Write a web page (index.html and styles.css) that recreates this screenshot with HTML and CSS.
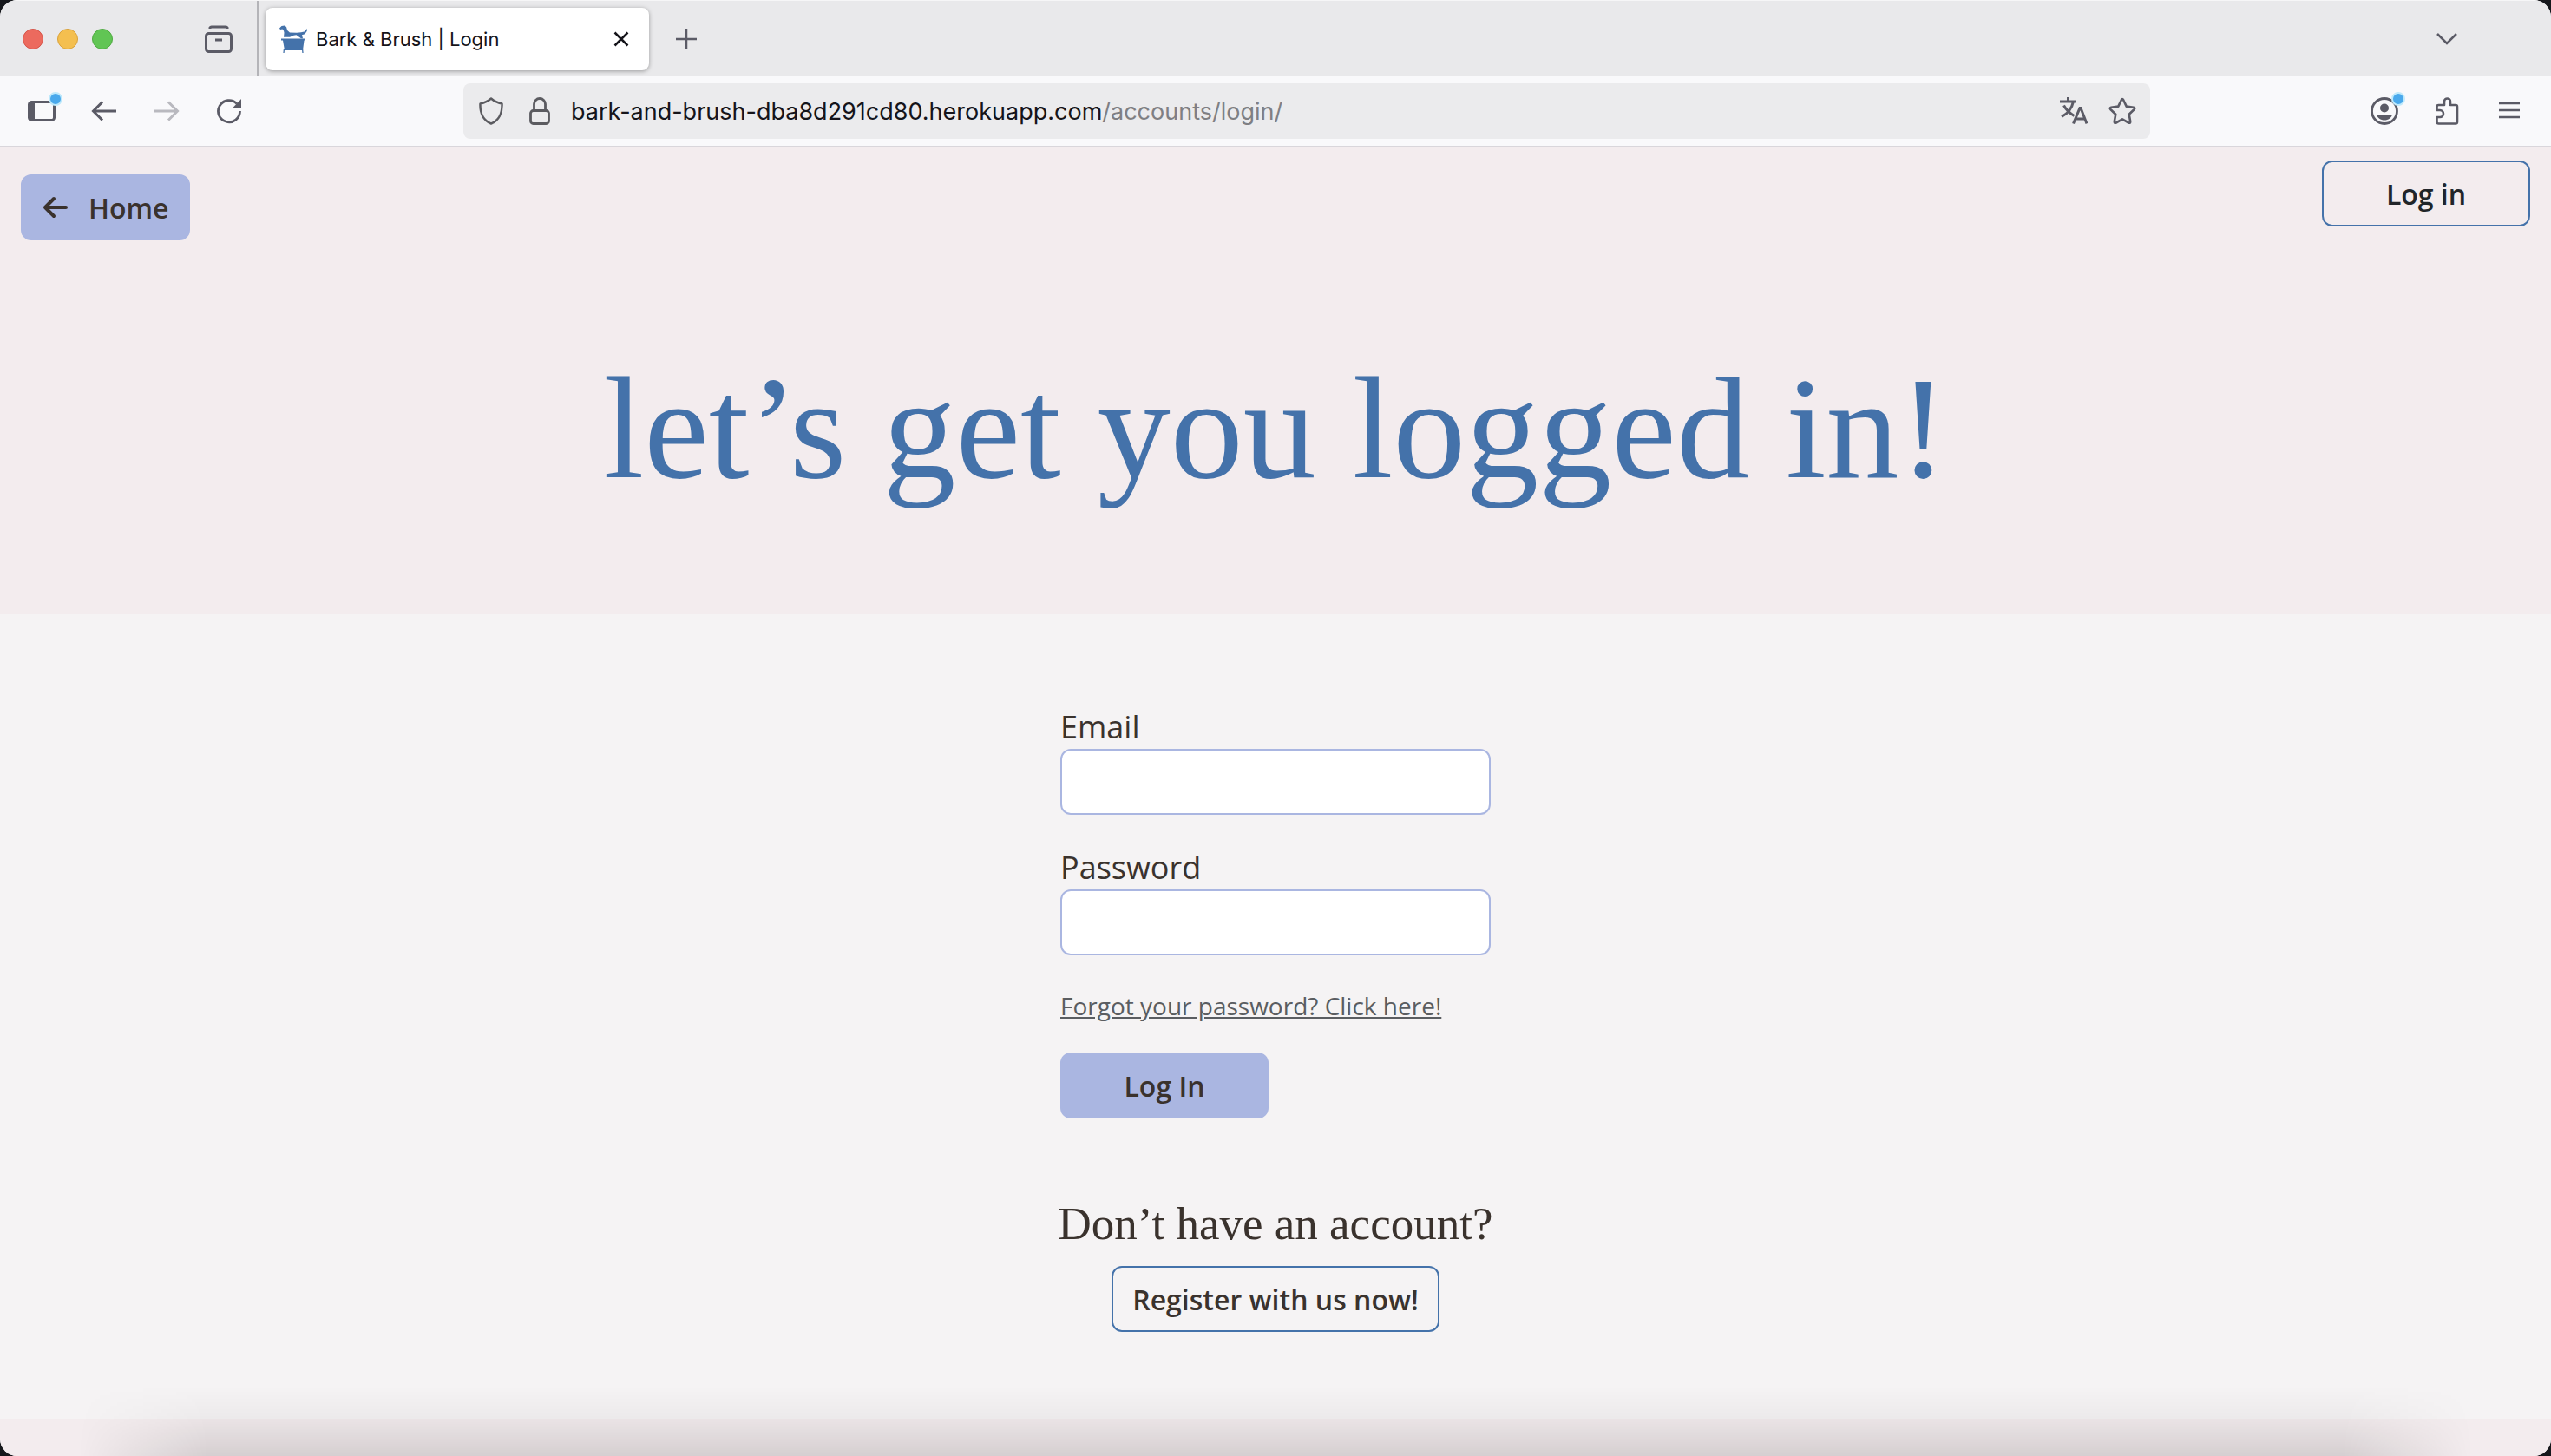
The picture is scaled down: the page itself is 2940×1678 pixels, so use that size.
FILE: index.html
```html
<!DOCTYPE html>
<html lang="en">
<head>
<meta charset="utf-8">
<title>Bark &amp; Brush | Login</title>
<link rel="stylesheet" href="styles.css">
</head>
<body>
<div class="window">
  <header class="tabstrip">
    <div class="lights">
      <button class="light light-close" aria-label="Close window"></button>
      <button class="light light-min" aria-label="Minimise window"></button>
      <button class="light light-max" aria-label="Zoom window"></button>
    </div>
    <button class="icon-btn archive" aria-label="Recent browsing">
      <svg class="icon" viewBox="0 0 32 32"><path d="M6 4V3a2 2 0 0 1 2-1h16a2 2 0 0 1 2 1v1" fill="none" stroke="currentColor" stroke-width="3"/><rect x="1.5" y="9.500" width="29" height="21" rx="3" fill="none" stroke="currentColor" stroke-width="3"/><path d="M12 17h8" stroke="currentColor" stroke-width="3"/></svg>
    </button>
    <div class="tab">
      <svg class="icon" viewBox="0 0 32 32" fill="#4472aa"><path d="M0 3.500L2.500 1 6 .500 8 2l1.200 4L12 8.500l8 .300 5-.600 4.500-1 2-3.500.300 3-2.500 3.500-3.300 1 1 4H25l-3.500-2.500-2-1.500-3 .500-4.500 2H5l.500-5L5 6.500 3.500 4.500 1 5z"/><path d="M2 15.500h28v2h-1.500L27 29H6L4 17.500H2z"/><path d="M5.500 27l-.500 5M26.500 27l.500 5" stroke="#4472aa" stroke-width="1.300"/></svg>
      <span class="tab-title">Bark &amp; Brush | Login</span>
      <button class="tab-close" aria-label="Close tab"><svg class="icon-sm" viewBox="0 0 24 24"><path d="M4.500 4.500l15 15M19.500 4.500l-15 15" stroke="#15141a" stroke-width="2.500"/></svg></button>
    </div>
    <button class="icon-btn new-tab" aria-label="New tab"><svg class="icon-sm" viewBox="0 0 24 24"><path d="M12 0v24M0 12h24" stroke="currentColor" stroke-width="2.500"/></svg></button>
    <button class="icon-btn all-tabs" aria-label="List all tabs"><svg class="icon-sm" viewBox="0 0 24 24"><path d="M1 6l11 11L23 6" fill="none" stroke="currentColor" stroke-width="2.500"/></svg></button>
  </header>

  <nav class="toolbar" aria-label="Browser">
    <div class="nav-buttons">
      <button class="icon-btn" aria-label="Sidebar"><svg class="icon" viewBox="0 0 32 32"><rect x="1.500" y="5.500" width="29" height="21" rx="3" fill="none" stroke="currentColor" stroke-width="3"/><path d="M2 6h6v20H2z" fill="currentColor"/></svg><span class="dot"></span></button>
      <button class="icon-btn" aria-label="Back"><svg class="icon" viewBox="0 0 32 32"><path d="M30 16H3.500M14 5.500L3.500 16 14 26.500" fill="none" stroke="currentColor" stroke-width="3"/></svg></button>
      <button class="icon-btn" aria-label="Forward" disabled><svg class="icon" viewBox="0 0 32 32"><path d="M2 16h26.500M18 5.500L28.500 16 18 26.500" fill="none" stroke="currentColor" stroke-width="3"/></svg></button>
      <button class="icon-btn" aria-label="Reload"><svg class="icon" viewBox="0 0 32 32"><path d="M28.500 16A12.500 12.500 0 1 1 25 7.500" fill="none" stroke="currentColor" stroke-width="2.800"/><path d="M30 2v10H20.500z" fill="currentColor"/></svg></button>
    </div>
    <div class="urlbar">
      <svg class="icon" viewBox="0 0 32 32"><path d="M16 1.500C12 5 8 6.500 3.500 7.500 3 18 7 27 16 30.500 25 27 29 18 28.500 7.500 24 6.500 20 5 16 1.500z" fill="none" stroke="currentColor" stroke-width="2.500" stroke-linejoin="round"/></svg>
      <svg class="icon" viewBox="0 0 32 32"><rect x="5.500" y="15.500" width="21" height="15" rx="3" fill="none" stroke="currentColor" stroke-width="2.800"/><path d="M9.500 15V8a6.500 6.500 0 0 1 13 0v7" fill="none" stroke="currentColor" stroke-width="2.800"/></svg>
      <div class="url">bark-and-brush-dba8d291cd80.herokuapp.com<span class="url-path">/accounts/login/</span></div>
      <button class="icon-btn" aria-label="Translate page"><svg class="icon" viewBox="0 0 32 32" fill="none" stroke="currentColor" stroke-width="3"><path d="M0 5h19M9.500 0v5M15.500 5C14 12 9 19 2 22.500M4.500 9.500c3 5.500 7 9 12 12"/><path d="M15.500 30.500L23 12.500h1l7 18M18 25h11"/></svg></button>
      <button class="icon-btn" aria-label="Bookmark page"><svg class="icon" viewBox="0 0 32 32"><path d="M14.800 3.200q1.200-2.200 2.400 0l3.500 7.400 8.300 1.200q2.200.500.700 2.200l-6 5.800 1.500 8.300q.200 2.300-2 1.400L16 25.400l-7.200 4.100q-2.200.900-2-1.400l1.500-8.300-6-5.800q-1.500-1.700.700-2.200l8.300-1.200z" fill="none" stroke="currentColor" stroke-width="2.600" stroke-linejoin="round"/></svg></button>
    </div>
    <div class="nav-buttons">
      <button class="icon-btn" aria-label="Account"><svg class="icon" viewBox="0 0 32 32"><circle cx="16" cy="16" r="14.500" fill="none" stroke="currentColor" stroke-width="2.800"/><circle cx="16" cy="12.500" r="5" fill="currentColor"/><path d="M7 20h18c-1 4-4.500 6.500-9 6.500S8 24 7 20z" fill="currentColor"/></svg><span class="dot"></span></button>
      <button class="icon-btn" aria-label="Extensions"><svg class="icon" viewBox="0 0 32 32"><path d="M4.500 15V11a2 2 0 0 1 2-2H13V5a3.500 3.500 0 0 1 7 0v4h6a2 2 0 0 1 2 2v17.500a2 2 0 0 1-2 2H6.500a2 2 0 0 1-2-2V23H8a4 4 0 0 0 0-8z" fill="none" stroke="currentColor" stroke-width="2.600" stroke-linejoin="round"/></svg></button>
      <button class="icon-btn" aria-label="Menu"><svg class="icon" viewBox="0 0 32 32"><path d="M4 7h24M4 15h24M4 23h24" stroke="currentColor" stroke-width="2.600"/></svg></button>
    </div>
  </nav>

  <section class="hero">
    <div class="hero-bar">
      <a class="btn btn-fill home" href="#"><svg class="icon" viewBox="0 0 32 32"><path d="M28 16H4M14 6L4 16l10 10" fill="none" stroke="currentColor" stroke-width="4" stroke-linecap="round" stroke-linejoin="round"/></svg>Home</a>
      <a class="btn btn-line login-link" href="#">Log in</a>
    </div>
    <h1 class="title">let’s get you logged in!</h1>
  </section>

  <main class="content">
    <form class="form">
      <div class="field"><label for="email">Email</label><input id="email" type="email"></div>
      <div class="field"><label for="password">Password</label><input id="password" type="password"></div>
      <a class="forgot" href="#">Forgot your password? Click here!</a>
      <button class="btn btn-fill submit" type="button">Log In</button>
    </form>
    <h2 class="subtitle">Don’t have an account?</h2>
    <a class="btn btn-line" href="#">Register with us now!</a>
  </main>
  <footer class="footer"></footer>
  <div class="dock-shade"></div>
</div>
</body>
</html>
```
FILE: styles.css
```css
* { box-sizing: border-box; }

body {
  margin: 0;
  background: #16181c;
  font-family: "Open Sans", sans-serif;
  color: #3a322d;
}

button { font: inherit; color: inherit; border: 0; padding: 0; background: none; }

.window {
  position: relative;
  display: flex;
  flex-direction: column;
  min-height: 100vh;
  border-radius: 20px;
  overflow: hidden;
  background: #f5f3f4;
}

.icon { display: block; width: 32px; height: 32px; flex: none; }
.icon-sm { display: block; width: 24px; height: 24px; flex: none; }
.icon-btn { position: relative; display: flex; align-items: center; color: #5b5b66; }
.icon-btn:disabled { opacity: 0.4; }

/* Tab strip */
.tabstrip {
  display: flex;
  align-items: center;
  height: 88px;
  background: #e9e9eb;
  border-top: 1px solid #f6f6f7;
  font-family: Inter, sans-serif;
}
.lights { display: flex; gap: 16px; padding-left: 26px; }
.light { width: 24px; height: 24px; border-radius: 50%; }
.light-close { background: #ec6a5e; border: 1px solid #d5554a; }
.light-min { background: #f4bf4f; border: 1px solid #d9a23c; }
.light-max { background: #61c554; border: 1px solid #50aa42; }
.archive { height: 100%; padding: 0 28px 0 106px; border-right: 2px solid #b4b4b8; }
.tab {
  display: flex;
  align-items: center;
  gap: 10px;
  width: 442px;
  height: 72px;
  margin-left: 8px;
  padding: 0 20px 0 16px;
  border-radius: 8px;
  background: #fff;
  box-shadow: 0 1px 5px rgba(0, 0, 0, 0.35);
  color: #15141a;
  font-size: 22px;
}
.tab-title { flex: 1; white-space: nowrap; }
.new-tab { margin-left: 31px; }
.all-tabs { margin-left: auto; margin-right: 108px; }

/* Toolbar */
.toolbar {
  display: flex;
  align-items: center;
  justify-content: space-between;
  height: 81px;
  padding: 0 32px;
  background: #f9f9fb;
  border-bottom: 1px solid #d9d6db;
}
.nav-buttons { display: flex; gap: 40px; }
.dot {
  position: absolute;
  top: -6px;
  right: -8px;
  width: 16px;
  height: 16px;
  border-radius: 50%;
  border: 2px solid #bfe9fb;
  background: #4aa9ec;
}
.urlbar {
  display: flex;
  flex: 1;
  align-items: center;
  gap: 24px;
  height: 64px;
  margin: 0 254px;
  padding: 0 16px;
  border-radius: 8px;
  background: #ebebed;
  color: #5b5b60;
  font-family: Inter, sans-serif;
  font-size: 27px;
}
.url { flex: 1; margin-left: -4px; color: #15141a; white-space: nowrap; }
.url-path { color: #7f7f83; }

/* Hero */
.hero { min-height: 539px; background: #f3ecee; }
.hero-bar {
  display: flex;
  align-items: flex-start;
  justify-content: space-between;
  padding: 16px 24px 0;
}
.title {
  margin: 120px 0 0;
  color: #4472aa;
  font: 400 168px/192px "Liberation Serif", serif;
  text-align: center;
}

.btn {
  display: flex;
  align-items: center;
  justify-content: center;
  height: 76px;
  padding: 0 22px;
  border: 2px solid #4472aa;
  border-radius: 12px;
  color: inherit;
  font-size: 32px;
  font-weight: 600;
  text-decoration: none;
}
.btn-fill { background: #aab6e1; border-color: #aab6e1; }
.home { gap: 22px; margin-top: 16px; }
.login-link { width: 240px; color: #212529; }

/* Login form */
.content {
  display: flex;
  flex: 1;
  flex-direction: column;
  align-items: center;
  padding: 105px 24px 96px;
}
.form { display: flex; flex-direction: column; width: 496px; font-size: 36px; }
.field { display: flex; flex-direction: column; margin-bottom: 36px; }
.field label { line-height: 50px; }
.field input {
  height: 76px;
  padding: 0 24px;
  border: 2px solid #aab6e1;
  border-radius: 12px;
  background: #fff;
  font: inherit;
}
.forgot { align-self: flex-start; color: #5a5d61; font-size: 28px; line-height: 44px; white-space: nowrap; }
.submit { width: 240px; margin-top: 32px; }
.subtitle { margin: 88px 0 16px; font: 400 53px/66px "Liberation Serif", serif; }

.footer { height: 43px; background: #f3ecee; }
.dock-shade {
  position: absolute;
  inset: auto 0 0;
  height: 80px;
  background: linear-gradient(transparent, rgba(0, 0, 0, 0.04) 50%, rgba(0, 0, 0, 0.12));
  -webkit-mask-image: linear-gradient(90deg, transparent 90px, #000 240px, #000 calc(100% - 240px), transparent calc(100% - 90px));
  mask-image: linear-gradient(90deg, transparent 90px, #000 240px, #000 calc(100% - 240px), transparent calc(100% - 90px));
  pointer-events: none;
}
```
